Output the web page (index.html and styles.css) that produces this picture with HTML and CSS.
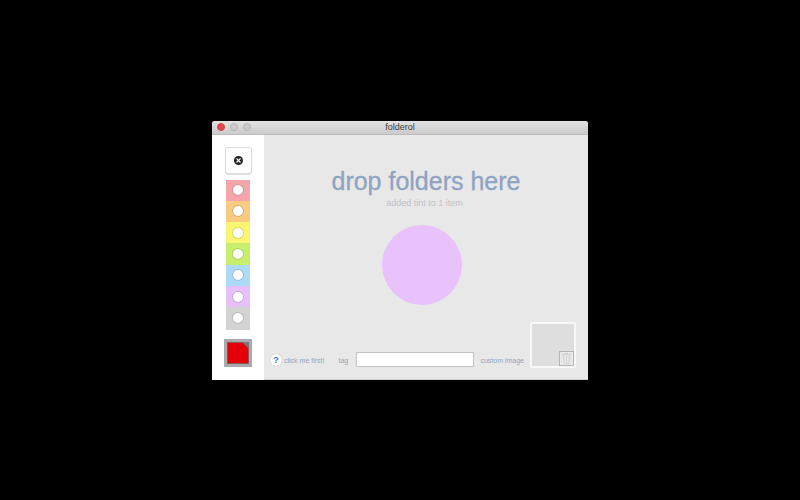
FILE: index.html
```
<!DOCTYPE html>
<html lang="en">
<head>
	<meta charset="UTF-8">
	<title>folderol</title>
	<link rel="stylesheet" href="styles.css">
</head>
<body>
<div class="window">
	<header class="titlebar">
		<div class="lights">
			<button class="light close" aria-label="close"></button>
			<button class="light" aria-label="minimize"></button>
			<button class="light" aria-label="zoom"></button>
		</div>
		<h1>folderol</h1>
	</header>
	<div class="content">
		<aside class="sidebar">
			<button class="clear" aria-label="remove tint">
				<svg width="9" height="9" viewBox="0 0 9 9">
					<circle cx="4.5" cy="4.5" r="4.5" fill="#222"/>
					<path d="M2.500 2.500l4 4M6.500 2.500l-4 4" stroke="#fff" stroke-width="1.2"/>
				</svg>
			</button>
			<div class="swatches" role="radiogroup" aria-label="tint">
				<label class="red"><input type="radio" name="tint" aria-label="red"></label>
				<label class="orange"><input type="radio" name="tint" aria-label="orange"></label>
				<label class="yellow"><input type="radio" name="tint" aria-label="yellow"></label>
				<label class="green"><input type="radio" name="tint" aria-label="green"></label>
				<label class="blue"><input type="radio" name="tint" aria-label="blue"></label>
				<label class="purple"><input type="radio" name="tint" aria-label="purple"></label>
				<label class="gray"><input type="radio" name="tint" aria-label="gray"></label>
			</div>
			<button class="picker" aria-label="custom color">
				<svg width="22" height="22" viewBox="0 0 22 22">
					<rect width="22" height="22" fill="#e30008"/>
					<rect x=".5" y=".5" width="21" height="21" fill="none" stroke="#88555a"/>
					<path d="M15 0h7v7z" fill="#777"/>
				</svg>
			</button>
		</aside>
		<main class="drop">
			<h2>drop folders here</h2>
			<p class="status">added tint to 1 item</p>
			<div class="dot"></div>
			<div class="tools">
				<button class="help" aria-label="help">?</button>
				<span class="hint">click me first!</span>
				<label class="tag" for="tag">tag</label>
				<input type="text" id="tag">
				<span class="custom">custom image</span>
				<div class="well">
					<button class="trash" aria-label="remove image">
						<svg width="9" height="11" viewBox="0 0 9 11" fill="none" stroke="#d0d0d0">
							<path d="M0 1.5h9M3 .5h3M1.500 2l.5 8.500h5l.5-8.500M4.500 3v6"/>
						</svg>
					</button>
				</div>
			</div>
		</main>
	</div>
</div>
</body>
</html>
```
FILE: styles.css
```
*{box-sizing: border-box;}
body,h1,h2,p{margin: 0;padding: 0;}
body{min-height: 100vh;display: flex;align-items: center;justify-content: center;background: #000;font-family: "Liberation Sans", Arial, sans-serif;}
button{padding: 0;border: 0;font-family: inherit;}
svg{display: block;}

.window{width: 47%;min-width: 376px;border-radius: 3px 3px 1px 1px;overflow: hidden;background: #e8e8e8;}

/* title bar */
.titlebar{display: grid;grid-template-columns: 1fr auto 1fr;align-items: center;height: 14px;padding: 0 5px;background: linear-gradient(#e2e2e2, #cbcbcb);border-bottom: 1px solid #bdbdbd;}
.titlebar h1{font-size: 9px;line-height: 12px;font-weight: normal;color: #3c3c3c;}
.lights{display: flex;gap: 5px;}
.light{width: 8px;height: 8px;border-radius: 50%;background: #cbcbcb;border: 1px solid #b4b4b4;}
.light.close{background: #e0474a;border-color: #cf4245;}

.content{display: flex;}

/* tint list */
.sidebar{width: 52px;flex: none;display: flex;flex-direction: column;align-items: center;padding: 12px 0 13px;background: #fff;}
.clear{display: flex;align-items: center;justify-content: center;width: 27px;height: 27px;border: 1px solid #ddd;border-radius: 3px;background: #fff;box-shadow: 0 1px 1px #ddd;}
.swatches{display: flex;flex-direction: column;width: 24px;height: 151px;margin: 6px 0 8px;}
.swatches label{flex: 1;display: flex;align-items: center;justify-content: center;}
.swatches input{appearance: none;width: 12px;height: 12px;margin: 0;border: 1px solid rgba(0,0,0,.12);border-radius: 50%;background: #fff;background-clip: padding-box;}
.red{background: #f4a5ac;}
.orange{background: #f8cb80;}
.yellow{background: #faf573;}
.green{background: #c8ee6e;}
.blue{background: #addaf8;}
.purple{background: #e6c0f8;}
.swatches .gray{flex: 0 0 23px;padding-bottom: 2px;background: #d3d3d3;}
.picker{padding: 3px;background: #aaa;}

/* drop area */
.drop{flex: 1;display: flex;flex-direction: column;align-items: center;padding: 32px 12px 11px 6px;border-bottom: 1px solid #cfcfcf;}
.drop h2{font-size: 25px;line-height: 28px;font-weight: normal;color: #8fa3c2;padding-left: 6px;-webkit-text-stroke: 0.3px #8fa3c2;}
.status{font-size: 9px;line-height: 12px;margin-top: 2px;padding-left: 3px;color: #c2c2c4;}
.dot{width: 80px;height: 80px;margin: 16px 2px 0 0;border-radius: 50%;background: #e9c2fc;}
.tools{align-self: stretch;display: flex;align-items: flex-end;margin-top: auto;font-size: 7px;line-height: 14px;color: #93a3bd;}
.help{width: 12px;height: 12px;margin-bottom: 2px;border-radius: 50%;background: #fff;box-shadow: 0 0 1px #999;color: #3c6dc4;font-size: 9px;line-height: 12px;font-weight: bold;}
.hint{margin-left: 2px;white-space: nowrap;}
.tag{margin: 0 8px 0 14px;}
.tools input{flex: 1;min-width: 0;height: 15px;margin-bottom: 1px;padding: 0 3px;border: 1px solid #c4c4c4;background: #fff;font: inherit;}
.custom{margin: 0 6px;white-space: nowrap;}
.well{width: 46px;height: 46px;display: flex;align-items: flex-end;justify-content: flex-end;border: 2px solid #f8f8f8;border-radius: 2px;background: #dedede;}
.trash{display: flex;align-items: center;justify-content: center;width: 15px;height: 15px;border: 1px solid #b5b5b5;background: #e9e9e9;}
```
